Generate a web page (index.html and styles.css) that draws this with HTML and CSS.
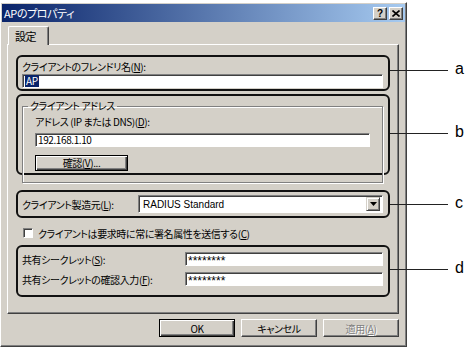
FILE: index.html
```html
<!DOCTYPE html>
<html lang="ja">
<head>
    <meta charset="UTF-8">
    <title>APのプロパティ</title>
    <link rel="stylesheet" href="styles.css">
</head>
<body>
    <div class="dialog">
        <div class="titlebar">
            <span class="title-text">APのプロパティ</span>
            <div class="title-buttons">
                <span class="title-btn">?</span>
                <span class="title-btn">
                    <svg width="8" height="7" viewBox="0 0 8 7"><path d="M0.5 0.5L7.5 6.5M7.5 0.5L0.5 6.5" stroke="#000" stroke-width="1.6"/></svg>
                </span>
            </div>
        </div>

        <div class="tabs">
            <div class="tab">設定</div>
        </div>

        <div class="panel">
            <!-- a: friendly name -->
            <div class="callout callout-a">
                <div class="field-label">クライアントのフレンドリ名(<u>N</u>):</div>
                <div class="textbox"><span class="selected">AP</span></div>
                <span class="callout-line"></span>
                <span class="callout-letter">a</span>
            </div>

            <!-- b: client address -->
            <div class="callout callout-b">
                <fieldset class="groupbox">
                    <legend>クライアント アドレス</legend>
                    <div class="field-label">アドレス (IP または DNS)(<u>D</u>):</div>
                    <div class="textbox address-box">192.168.1.10</div>
                    <button class="button default verify-button">確認(<u>V</u>)...</button>
                </fieldset>
                <span class="callout-line"></span>
                <span class="callout-letter">b</span>
            </div>

            <!-- c: vendor -->
            <div class="callout callout-c">
                <span class="field-label vendor-label">クライアント製造元(<u>L</u>):</span>
                <div class="select">
                    <span class="select-value">RADIUS Standard</span>
                    <span class="select-arrow">
                        <svg width="7" height="4" viewBox="0 0 7 4"><path d="M0 0H7L3.5 4Z" fill="#000"/></svg>
                    </span>
                </div>
                <span class="callout-line"></span>
                <span class="callout-letter">c</span>
            </div>

            <div class="check-row">
                <span class="checkbox"></span>
                <span>クライアントは要求時に常に署名属性を送信する(<u>C</u>)</span>
            </div>

            <!-- d: shared secret -->
            <div class="callout callout-d">
                <div class="secret-row">
                    <span class="field-label">共有シークレット(<u>S</u>):</span>
                    <div class="textbox secret-box">********</div>
                </div>
                <div class="secret-row">
                    <span class="field-label">共有シークレットの確認入力(<u>F</u>):</span>
                    <div class="textbox secret-box">********</div>
                </div>
                <span class="callout-line"></span>
                <span class="callout-letter">d</span>
            </div>
        </div>

        <div class="dialog-buttons">
            <button class="button default">OK</button>
            <button class="button">キャンセル</button>
            <button class="button disabled">適用(<u>A</u>)</button>
        </div>
    </div>
</body>
</html>
```

FILE: styles.css
```css
:root {
    --face: #d4d0c8;
    --shadow: #808080;
    --dark: #404040;
    --light: #ffffff;
}

* {
    margin: 0;
    padding: 0;
    box-sizing: border-box;
}

body {
    width: 466px;
    height: 352px;
    overflow: hidden;
    background: #fff;
    color: #000;
    font-family: "Noto Sans CJK JP", sans-serif;
    font-size: 10px;
    line-height: 13px;
    letter-spacing: -0.4px;
    font-feature-settings: "palt";
}

u {
    text-decoration: underline;
    text-underline-offset: 1px;
}

.dialog {
    margin-top: 2px;
    width: 407px;
    height: 345px;
    padding: 1px;
    background: var(--face);
    border: 1px solid;
    border-color: var(--light) var(--dark) var(--dark) var(--light);
    box-shadow: inset -1px -1px var(--shadow);
}

.titlebar {
    height: 18px;
    display: flex;
    align-items: center;
    justify-content: space-between;
    padding: 0 2px 0 2px;
    background: linear-gradient(to right, #0a246a, #a6caf0);
    color: #fff;
    font-size: 11px;
}

.title-buttons {
    display: flex;
    gap: 2px;
}

.title-btn {
    width: 14px;
    height: 13px;
    display: flex;
    align-items: center;
    justify-content: center;
    background: var(--face);
    border: 1px solid;
    border-color: var(--light) var(--dark) var(--dark) var(--light);
    box-shadow: inset -1px -1px var(--shadow);
    color: #000;
    font-family: "Liberation Sans", sans-serif;
    font-weight: bold;
    font-size: 10px;
    letter-spacing: 0;
}

.tabs {
    height: 22px;
    display: flex;
    align-items: flex-end;
    padding-left: 6px;
}

.tab {
    position: relative;
    z-index: 1;
    width: 41px;
    height: 19px;
    margin-bottom: -1px;
    padding: 3px 0 0 6px;
    background: var(--face);
    border-top: 1px solid var(--light);
    border-left: 1px solid var(--light);
    border-right: 1px solid var(--dark);
    border-radius: 2px 2px 0 0;
    box-shadow: inset -1px 0 var(--shadow);
    font-size: 11px;
}

.panel {
    margin-left: 5px;
    width: 392px;
    height: 270px;
    padding: 10px 8px 0 8px;
    border: 1px solid;
    border-color: var(--light) var(--dark) var(--dark) var(--light);
    box-shadow: inset -1px -1px var(--shadow);
}

.callout {
    position: relative;
    border: 2px solid #111;
    border-radius: 6px;
}

.callout-line {
    position: absolute;
    left: calc(100% + 2px);
    top: var(--line-top);
    width: 58px;
    height: 1px;
    background: #222;
}

.callout-letter {
    position: absolute;
    left: calc(100% + 67px);
    top: calc(var(--line-top) - 9px);
    font-family: "Liberation Sans", sans-serif;
    font-size: 16px;
    line-height: 16px;
    letter-spacing: 0;
}

.callout-a {
    --line-top: 13px;
    height: 36px;
    padding: 1px 5px 0 4px;
}

.callout-a .field-label {
    height: 16px;
    padding-top: 2px;
}

.textbox {
    height: 14px;
    padding-left: 2px;
    background: #fff;
    border: 1px solid;
    border-color: var(--shadow) var(--light) var(--light) var(--shadow);
    box-shadow: inset 1px 1px var(--dark);
    line-height: 12px;
    white-space: nowrap;
    overflow: hidden;
}

.selected {
    background: #0a246a;
    color: #fff;
    padding: 0 1px;
}

.callout-b {
    --line-top: 37px;
    height: 81px;
    margin-top: 3px;
    padding: 4px 5px 0 4px;
}

.groupbox {
    height: 83px;
    padding: 3px 12px 0 12px;
    border: 1px solid var(--shadow);
    box-shadow: inset 1px 1px var(--light), 1px 1px var(--light);
}

.groupbox legend {
    margin-left: -7px;
    padding: 0 2px;
    line-height: 12px;
}

.address-box {
    width: 335px;
    margin-top: 5px;
}

.button {
    display: block;
    height: 18px;
    background: var(--face);
    border: 1px solid;
    border-color: var(--light) var(--dark) var(--dark) var(--light);
    box-shadow: inset -1px -1px var(--shadow);
    font-family: inherit;
    font-size: 10px;
    line-height: 13px;
    letter-spacing: -0.4px;
    color: #000;
    font-feature-settings: "palt";
}

.button.default {
    border: 1px solid #000;
    box-shadow: inset 1px 1px var(--light), inset -1px -1px var(--dark), inset -2px -2px var(--shadow);
}

.button.disabled {
    color: var(--shadow);
    text-shadow: 1px 1px var(--light);
}

.verify-button {
    width: 93px;
    height: 16px;
    margin-top: 8px;
    line-height: 12px;
}

.callout-c {
    --line-top: 12px;
    height: 28px;
    margin-top: 15px;
    padding: 0 5px 0 4px;
    display: flex;
    align-items: center;
}

.vendor-label {
    width: 116px;
}

.select {
    width: 245px;
    height: 18px;
    display: flex;
    align-items: center;
    justify-content: space-between;
    padding: 0 2px 0 4px;
    background: #fff;
    border: 1px solid;
    border-color: var(--shadow) var(--light) var(--light) var(--shadow);
    box-shadow: inset 1px 1px var(--dark);
}

.select-value {
    font-family: "Liberation Sans", sans-serif;
    font-size: 10px;
    letter-spacing: 0;
}

.select-arrow {
    width: 14px;
    height: 14px;
    display: flex;
    align-items: center;
    justify-content: center;
    background: var(--face);
    border: 1px solid;
    border-color: var(--face) var(--dark) var(--dark) var(--face);
    box-shadow: inset 1px 1px var(--light), inset -1px -1px var(--shadow);
}

.check-row {
    height: 14px;
    margin-top: 8px;
    padding-left: 7px;
    display: flex;
    align-items: center;
    gap: 5px;
}

.checkbox {
    width: 10px;
    height: 10px;
    background: #fff;
    border: 1px solid;
    border-color: var(--shadow) var(--light) var(--light) var(--shadow);
    box-shadow: inset 1px 1px var(--dark);
}

.callout-d {
    --line-top: 22px;
    height: 52px;
    margin-top: 5px;
    padding: 5px 5px 0 4px;
    display: flex;
    flex-direction: column;
    gap: 6px;
}

.secret-row {
    display: flex;
    align-items: center;
    justify-content: space-between;
}

.secret-box {
    width: 198px;
    padding-top: 2px;
    font-family: "Liberation Sans", sans-serif;
    font-size: 12px;
    line-height: 12px;
    letter-spacing: 0;
    overflow: visible;
}

.dialog-buttons {
    display: flex;
    justify-content: flex-end;
    gap: 6px;
    margin-top: 5px;
    padding-right: 6px;
}

.dialog-buttons .button {
    width: 76px;
}
```
